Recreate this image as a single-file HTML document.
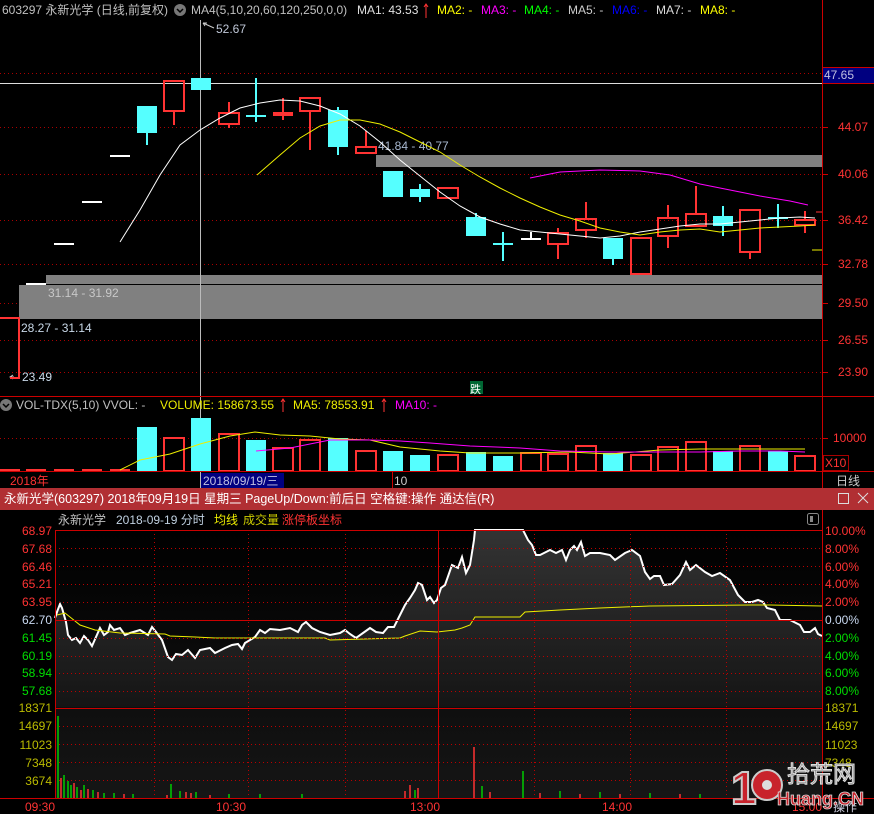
<!DOCTYPE html>
<html><head><meta charset="utf-8"><style>
html,body{margin:0;padding:0;background:#000;width:874px;height:814px;overflow:hidden}
svg{display:block;font-family:"Liberation Sans","Noto Sans CJK SC",sans-serif;font-size:12px}
</style></head><body>
<svg width="874" height="814" viewBox="0 0 874 814" xmlns="http://www.w3.org/2000/svg">
<defs>
<linearGradient id="g" x1="0" y1="0" x2="0" y2="1"><stop offset="0" stop-color="#333"/><stop offset="1" stop-color="#151515"/></linearGradient>
<linearGradient id="bg" x1="0" y1="0" x2="0" y2="1"><stop offset="0" stop-color="#000"/><stop offset="1" stop-color="#161616"/></linearGradient>
</defs>
<rect width="874" height="814" fill="#000"/>
<!-- top header -->
<text x="2" y="14" fill="#c0c0c0">603297 永新光学 (日线,前复权)</text>
<circle cx="180" cy="10" r="6" fill="#777"/><path d="M177 9l3 3 3-3" stroke="#000" stroke-width="1.5" fill="none"/>
<text x="191" y="14" fill="#c0c0c0">MA4(5,10,20,60,120,250,0,0)</text>
<text x="357" y="14" fill="#e0e0e0">MA1: 43.53</text><path d="M426 4v14M424 7l2-3 2 3" stroke="#f33" fill="none"/>
<text x="437" y="14" fill="#ff0">MA2: -</text>
<text x="481" y="14" fill="#f0f">MA3: -</text>
<text x="524" y="14" fill="#0f0">MA4: -</text>
<text x="568" y="14" fill="#ccc">MA5: -</text>
<text x="612" y="14" fill="#00f">MA6: -</text>
<text x="656" y="14" fill="#ddd">MA7: -</text>
<text x="700" y="14" fill="#ff0">MA8: -</text>
<line x1="822.5" y1="0" x2="822.5" y2="488" stroke="#c00"/>
<g stroke="#a00" stroke-dasharray="1,3">
<line x1="0" y1="73.5" x2="822" y2="73.5"/><line x1="0" y1="127.5" x2="822" y2="127.5"/><line x1="0" y1="174.5" x2="822" y2="174.5"/><line x1="0" y1="220.5" x2="822" y2="220.5"/><line x1="0" y1="264.5" x2="822" y2="264.5"/><line x1="0" y1="303.5" x2="822" y2="303.5"/><line x1="0" y1="340.5" x2="822" y2="340.5"/><line x1="0" y1="372.5" x2="822" y2="372.5"/>
</g>
<g stroke="#c00"><line x1="822" y1="127.5" x2="828" y2="127.5"/><line x1="822" y1="174.5" x2="828" y2="174.5"/><line x1="822" y1="220.5" x2="828" y2="220.5"/><line x1="822" y1="264.5" x2="828" y2="264.5"/><line x1="822" y1="303.5" x2="828" y2="303.5"/><line x1="822" y1="340.5" x2="828" y2="340.5"/><line x1="822" y1="372.5" x2="828" y2="372.5"/></g>
<rect x="823" y="67" width="51" height="16" fill="#000080"/><line x1="823" y1="67.5" x2="874" y2="67.5" stroke="#c00"/><line x1="823" y1="83.5" x2="874" y2="83.5" stroke="#c00"/>
<text x="824" y="79" fill="#c0c0e0">47.65</text>
<g fill="#f33"><text x="838" y="131">44.07</text><text x="838" y="178">40.06</text><text x="838" y="224">36.42</text><text x="838" y="268">32.78</text><text x="838" y="307">29.50</text><text x="838" y="344">26.55</text><text x="838" y="376">23.90</text></g>
<rect x="376" y="155" width="446" height="12" fill="#808080"/>
<rect x="46" y="275" width="776" height="9" fill="#808080"/>
<rect x="19" y="285" width="803" height="34" fill="#808080"/>
<text x="378" y="150" fill="#a8b8d0">41.84 - 40.77</text>
<text x="48" y="297" fill="#c8c8c8">31.14 - 31.92</text>
<text x="21" y="332" fill="#c8d8e8">28.27 - 31.14</text>
<text x="22" y="381" fill="#c8d8e8">23.49</text><path d="M14 377l-3 0M13 375l-3 2 3 2" stroke="#ccc" fill="none"/>
<line x1="0" y1="83.5" x2="822" y2="83.5" stroke="#ddd"/>
<line x1="200.5" y1="20" x2="200.5" y2="488" stroke="#bbb"/>
<text x="216" y="33" fill="#c0c8d8">52.67</text><path d="M203 23l11 5M203 23l4 0M203 23l2 3" stroke="#ccc" fill="none"/>
<rect x="470" y="381" width="13" height="13" fill="#063"/><text x="470" y="393" fill="#fff" font-size="11">跌</text>
<g stroke="#f33" stroke-width="2" fill="none">
<path d="M0 318h19v60H10"/>
<rect x="164" y="81" width="20" height="30"/><line x1="174" y1="111" x2="174" y2="125"/>
<rect x="219" y="113" width="20" height="11"/><line x1="229" y1="102" x2="229" y2="113"/><line x1="229" y1="124" x2="229" y2="128"/>
<rect x="300" y="98" width="20" height="13"/><line x1="310" y1="111" x2="310" y2="150"/>
<rect x="356" y="147" width="20" height="6"/><line x1="366" y1="131" x2="366" y2="147"/>
<rect x="438" y="188" width="20" height="10"/>
<rect x="548" y="233" width="20" height="11"/><line x1="558" y1="244" x2="558" y2="259"/><line x1="558" y1="228" x2="558" y2="233"/>
<rect x="576" y="219" width="20" height="11"/><line x1="586" y1="202" x2="586" y2="219"/><line x1="586" y1="230" x2="586" y2="238"/>
<rect x="631" y="238" width="20" height="36"/>
<rect x="658" y="218" width="20" height="18"/><line x1="668" y1="205" x2="668" y2="218"/><line x1="668" y1="236" x2="668" y2="248"/>
<rect x="686" y="214" width="20" height="12"/><line x1="696" y1="186" x2="696" y2="214"/>
<rect x="740" y="210" width="20" height="42"/><line x1="750" y1="252" x2="750" y2="259"/>
<rect x="795" y="220" width="20" height="5"/><line x1="805" y1="211" x2="805" y2="220"/><line x1="805" y1="225" x2="805" y2="233"/>
</g>
<rect x="273" y="112" width="20" height="4" fill="#f33"/><line x1="283" y1="98" x2="283" y2="120" stroke="#f33" stroke-width="2"/>
<g fill="#5ff"><rect x="137" y="106" width="20" height="27"/><rect x="146" y="133" width="2" height="12"/>
<rect x="191" y="78" width="20" height="12"/>
<rect x="328" y="110" width="20" height="37"/><rect x="337" y="107" width="2" height="48"/>
<rect x="383" y="171" width="20" height="26"/>
<rect x="410" y="189" width="20" height="8"/><rect x="419" y="184" width="2" height="18"/>
<rect x="466" y="217" width="20" height="19"/><rect x="475" y="213" width="2" height="5"/>
<rect x="603" y="238" width="20" height="21"/><rect x="612" y="259" width="2" height="6"/>
<rect x="713" y="216" width="20" height="10"/><rect x="722" y="206" width="2" height="30"/>
</g>
<g stroke="#5ff" stroke-width="2"><line x1="246" y1="116" x2="266" y2="116"/><line x1="256" y1="78" x2="256" y2="122"/>
<line x1="493" y1="244" x2="513" y2="244"/><line x1="503" y1="232" x2="503" y2="261"/>
<line x1="768" y1="218" x2="788" y2="218"/><line x1="778" y1="204" x2="778" y2="228"/></g>
<g stroke="#fff" stroke-width="2"><line x1="26" y1="284" x2="46" y2="284"/><line x1="54" y1="244" x2="74" y2="244"/><line x1="82" y1="202" x2="102" y2="202"/><line x1="110" y1="156" x2="130" y2="156"/><line x1="521" y1="239" x2="541" y2="239"/><line x1="531" y1="232" x2="531" y2="240"/></g>
<line x1="812" y1="250" x2="822" y2="250" stroke="#ee0"/><line x1="816" y1="212" x2="822" y2="212" stroke="#f33"/>
<polyline fill="none" stroke="#fff" points="120,242 140,210 160,175 180,145 200,130 220,118 240,108 260,103 280,100 300,101 320,106 340,114 360,126 380,142 400,160 420,176 440,192 460,206 480,217 500,224 520,230 550,233 580,236 600,238 620,236 640,232 660,229 680,226 700,224 720,224 740,222 760,220 780,218 800,217 815,218"/>
<polyline fill="none" stroke="#ee0" points="257,175 280,155 300,138 320,126 340,120 360,120 380,124 400,132 420,142 440,152 460,165 480,177 500,188 520,198 540,207 560,215 580,221 600,228 620,232 640,235 660,232 680,230 700,229 720,232 740,230 760,228 780,227 800,226 815,225"/>
<polyline fill="none" stroke="#f0f" points="530,178 560,172 600,170 640,171 670,175 700,184 730,190 760,196 790,201 808,205"/>
<line x1="0" y1="396.5" x2="874" y2="396.5" stroke="#c00"/>
<circle cx="6" cy="405" r="6" fill="#777"/><path d="M3 404l3 3 3-3" stroke="#000" stroke-width="1.5" fill="none"/>
<text x="16" y="409" fill="#c0c0c0">VOL-TDX(5,10)  VVOL: -</text>
<text x="160" y="409" fill="#ee0">VOLUME: 158673.55</text><path d="M283 399v13M281 402l2-3 2 3" stroke="#f33" fill="none"/>
<text x="293" y="409" fill="#ee0">MA5: 78553.91</text><path d="M384 399v13M382 402l2-3 2 3" stroke="#f33" fill="none"/>
<text x="395" y="409" fill="#f0f">MA10: -</text>
<line x1="0" y1="438.5" x2="822" y2="438.5" stroke="#a00" stroke-dasharray="1,3"/>
<line x1="822" y1="438.5" x2="828" y2="438.5" stroke="#c00"/>
<text x="833" y="442" fill="#f33">10000</text>
<rect x="823.5" y="455.5" width="25" height="15" fill="none" stroke="#a00"/><text x="825" y="467" fill="#f33">X10</text>
<g fill="#5ff"><rect x="137" y="427" width="20" height="44"/><rect x="191" y="418" width="20" height="53"/><rect x="246" y="440" width="20" height="31"/><rect x="328" y="438" width="20" height="33"/><rect x="383" y="451" width="20" height="20"/><rect x="410" y="455" width="20" height="16"/><rect x="466" y="452" width="20" height="19"/><rect x="493" y="456" width="20" height="15"/><rect x="603" y="453" width="20" height="18"/><rect x="713" y="451" width="20" height="20"/><rect x="768" y="451" width="20" height="20"/></g>
<g stroke="#f33" stroke-width="2" fill="none"><rect x="164" y="438" width="20" height="33"/><rect x="219" y="434" width="20" height="37"/><rect x="273" y="448" width="20" height="23"/><rect x="300" y="440" width="20" height="31"/><rect x="356" y="451" width="20" height="20"/><rect x="438" y="455" width="20" height="16"/><rect x="521" y="453" width="20" height="18"/><rect x="548" y="454" width="20" height="17"/><rect x="576" y="446" width="20" height="25"/><rect x="631" y="455" width="20" height="16"/><rect x="658" y="447" width="20" height="24"/><rect x="686" y="442" width="20" height="29"/><rect x="740" y="446" width="20" height="25"/><rect x="795" y="456" width="20" height="15"/></g>
<g fill="#f33"><rect x="0" y="469" width="20" height="2"/><rect x="26" y="469" width="20" height="2"/><rect x="54" y="469" width="20" height="2"/><rect x="82" y="469" width="20" height="2"/><rect x="110" y="469" width="20" height="2"/></g>
<polyline fill="none" stroke="#ee0" points="120,470 140,460 170,454 200,444 230,436 255,432 280,435 310,436 340,439 370,440 400,447 440,451 470,453 520,453 570,452 610,454 660,450 700,449 740,449 780,449 805,449"/>
<polyline fill="none" stroke="#f0f" points="256,451 290,448 330,440 370,440 400,441 430,443 470,446 520,448 560,451 610,452 660,452 700,452 740,451 780,451 805,452"/>
<line x1="0" y1="471.5" x2="874" y2="471.5" stroke="#c00"/>
<text x="10" y="485" fill="#f33">2018年</text>
<rect x="201" y="473" width="83" height="15" fill="#000080"/><text x="203" y="485" fill="#c0c0e0">2018/09/19/三</text>
<line x1="392.5" y1="472" x2="392.5" y2="488" stroke="#c00"/><text x="394" y="485" fill="#ccc">10</text>
<text x="836" y="485" fill="#ccc">日线</text>
<rect x="0" y="488" width="874" height="22" fill="#b12f33"/>
<text x="4" y="503" fill="#fff" font-size="12.5">永新光学(603297) 2018年09月19日 星期三 PageUp/Down:前后日 空格键:操作 通达信(R)</text>
<rect x="838.5" y="493.5" width="10" height="10" fill="none" stroke="#ddd"/>
<path d="M858 493l10 10M868 493l-10 10" stroke="#ddd"/>
<text x="58" y="524" fill="#c0c0c0">永新光学</text><text x="116" y="524" fill="#c0d0e0">2018-09-19 分时</text>
<text x="214" y="524" fill="#ee0">均线</text><text x="243" y="524" fill="#cc0">成交量</text><text x="282" y="524" fill="#f33">涨停板坐标</text>
<rect x="807.5" y="513.5" width="11" height="11" rx="2" fill="none" stroke="#888"/><rect x="810" y="516" width="3" height="6" fill="#888"/>
<rect x="55" y="530" width="767" height="268" fill="url(#bg)"/>
<polygon fill="url(#g)" points="55,618 57,612 60,604 62,608 66,622 68,635 72,640 76,638 80,643 84,636 88,640 92,646 96,637 100,628 104,635 108,632 110,625 114,630 120,628 125,635 130,633 140,630 148,635 152,627 156,632 162,640 168,657 172,660 176,654 182,655 188,650 195,658 200,650 210,648 215,653 225,648 232,645 238,644 242,649 245,643 250,640 255,637 260,630 265,633 270,629 280,630 290,628 298,632 302,625 306,622 312,628 320,632 330,635 340,633 345,630 350,634 356,638 363,633 370,628 376,632 383,633 388,627 394,627 400,615 405,605 410,598 415,590 418,583 422,585 427,600 430,597 434,603 437,600 441,588 445,585 452,565 458,568 462,557 466,573 470,565 474,540 475,530 523,530 528,540 532,545 536,555 540,555 546,552 550,550 556,553 562,550 566,560 570,550 574,546 577,550 581,542 585,556 590,553 600,553 610,555 615,560 625,553 632,550 640,556 645,572 650,579 654,576 660,576 664,585 672,584 680,575 686,562 690,570 696,565 705,572 712,576 720,573 730,580 738,595 745,602 752,602 758,600 763,602 767,608 775,610 780,620 790,620 800,625 804,632 810,632 815,628 818,634 822,636 822,707 55,707"/>
<polyline fill="none" stroke="#fff" stroke-width="2" points="55,618 57,612 60,604 62,608 66,622 68,635 72,640 76,638 80,643 84,636 88,640 92,646 96,637 100,628 104,635 108,632 110,625 114,630 120,628 125,635 130,633 140,630 148,635 152,627 156,632 162,640 168,657 172,660 176,654 182,655 188,650 195,658 200,650 210,648 215,653 225,648 232,645 238,644 242,649 245,643 250,640 255,637 260,630 265,633 270,629 280,630 290,628 298,632 302,625 306,622 312,628 320,632 330,635 340,633 345,630 350,634 356,638 363,633 370,628 376,632 383,633 388,627 394,627 400,615 405,605 410,598 415,590 418,583 422,585 427,600 430,597 434,603 437,600 441,588 445,585 452,565 458,568 462,557 466,573 470,565 474,540 475,530 523,530 528,540 532,545 536,555 540,555 546,552 550,550 556,553 562,550 566,560 570,550 574,546 577,550 581,542 585,556 590,553 600,553 610,555 615,560 625,553 632,550 640,556 645,572 650,579 654,576 660,576 664,585 672,584 680,575 686,562 690,570 696,565 705,572 712,576 720,573 730,580 738,595 745,602 752,602 758,600 763,602 767,608 775,610 780,620 790,620 800,625 804,632 810,632 815,628 818,634 822,636"/>
<polyline fill="none" stroke="#ee0" points="57,615 65,613 80,625 95,630 120,633 165,634 170,636 195,637 215,638 325,638 330,640 400,638 405,636 420,631 437,632 455,630 462,628 470,625 475,617 520,617 525,612 560,610 600,608 650,606 750,605 770,605 822,606"/>
<g stroke="#b00" stroke-dasharray="1,3">
<line x1="55" y1="548.5" x2="822" y2="548.5"/><line x1="55" y1="566.5" x2="822" y2="566.5"/><line x1="55" y1="584.5" x2="822" y2="584.5"/><line x1="55" y1="602.5" x2="822" y2="602.5"/><line x1="55" y1="638.5" x2="822" y2="638.5"/><line x1="55" y1="656.5" x2="822" y2="656.5"/><line x1="55" y1="673.5" x2="822" y2="673.5"/><line x1="55" y1="691.5" x2="822" y2="691.5"/><line x1="55" y1="726.5" x2="822" y2="726.5"/><line x1="55" y1="744.5" x2="822" y2="744.5"/><line x1="55" y1="762.5" x2="822" y2="762.5"/><line x1="55" y1="780.5" x2="822" y2="780.5"/>
<line x1="154.5" y1="530" x2="154.5" y2="798"/><line x1="248.5" y1="530" x2="248.5" y2="798"/><line x1="345.5" y1="530" x2="345.5" y2="798"/><line x1="534.5" y1="530" x2="534.5" y2="798"/><line x1="630.5" y1="530" x2="630.5" y2="798"/><line x1="726.5" y1="530" x2="726.5" y2="798"/>
</g>
<g stroke="#c00"><line x1="55" y1="530.5" x2="822" y2="530.5"/><line x1="55" y1="620.5" x2="822" y2="620.5"/><line x1="55" y1="708.5" x2="822" y2="708.5"/><line x1="0" y1="798.5" x2="874" y2="798.5"/><line x1="55.5" y1="530" x2="55.5" y2="798"/><line x1="822.5" y1="510" x2="822.5" y2="798"/><line x1="438.5" y1="530" x2="438.5" y2="798"/></g>
<g stroke="#0c0" stroke-width="1.5"><line x1="58" y1="716" x2="58" y2="798"/><line x1="64" y1="775" x2="64" y2="798"/><line x1="68" y1="781" x2="68" y2="798"/><line x1="71" y1="785" x2="71" y2="798"/><line x1="77" y1="787" x2="77" y2="798"/><line x1="84" y1="785" x2="84" y2="798"/><line x1="93" y1="790" x2="93" y2="798"/><line x1="104" y1="793" x2="104" y2="798"/><line x1="114" y1="793" x2="114" y2="798"/><line x1="133" y1="794" x2="133" y2="798"/><line x1="171" y1="784" x2="171" y2="798"/><line x1="180" y1="791" x2="180" y2="798"/><line x1="196" y1="792" x2="196" y2="798"/><line x1="229" y1="794" x2="229" y2="798"/><line x1="260" y1="794" x2="260" y2="798"/><line x1="302" y1="794" x2="302" y2="798"/><line x1="415" y1="790" x2="415" y2="798"/><line x1="482" y1="786" x2="482" y2="798"/><line x1="523" y1="771" x2="523" y2="798"/><line x1="560" y1="791" x2="560" y2="798"/><line x1="600" y1="792" x2="600" y2="798"/><line x1="650" y1="793" x2="650" y2="798"/><line x1="700" y1="794" x2="700" y2="798"/></g>
<g stroke="#f33" stroke-width="1.5"><line x1="61" y1="778" x2="61" y2="798"/><line x1="74" y1="783" x2="74" y2="798"/><line x1="81" y1="790" x2="81" y2="798"/><line x1="88" y1="789" x2="88" y2="798"/><line x1="98" y1="792" x2="98" y2="798"/><line x1="124" y1="794" x2="124" y2="798"/><line x1="167" y1="795" x2="167" y2="798"/><line x1="186" y1="792" x2="186" y2="798"/><line x1="191" y1="793" x2="191" y2="798"/><line x1="210" y1="795" x2="210" y2="798"/><line x1="405" y1="791" x2="405" y2="798"/><line x1="410" y1="785" x2="410" y2="798"/><line x1="418" y1="788" x2="418" y2="798"/><line x1="474" y1="747" x2="474" y2="798"/><line x1="490" y1="792" x2="490" y2="798"/><line x1="540" y1="793" x2="540" y2="798"/><line x1="580" y1="794" x2="580" y2="798"/><line x1="620" y1="794" x2="620" y2="798"/><line x1="680" y1="794" x2="680" y2="798"/></g>
<g text-anchor="end">
<text x="52" y="535" fill="#f33">68.97</text><text x="52" y="553" fill="#f33">67.68</text><text x="52" y="571" fill="#f33">66.46</text><text x="52" y="588" fill="#f33">65.21</text><text x="52" y="606" fill="#f33">63.95</text><text x="52" y="624" fill="#c8d8f0">62.70</text><text x="52" y="642" fill="#0d0">61.45</text><text x="52" y="660" fill="#0d0">60.19</text><text x="52" y="677" fill="#0d0">58.94</text><text x="52" y="695" fill="#0d0">57.68</text>
<text x="52" y="712" fill="#bb0">18371</text><text x="52" y="730" fill="#bb0">14697</text><text x="52" y="749" fill="#bb0">11023</text><text x="52" y="767" fill="#bb0">7348</text><text x="52" y="785" fill="#bb0">3674</text>
</g>
<g>
<text x="825" y="535" fill="#f33">10.00%</text><text x="825" y="553" fill="#f33">8.00%</text><text x="825" y="571" fill="#f33">6.00%</text><text x="825" y="588" fill="#f33">4.00%</text><text x="825" y="606" fill="#f33">2.00%</text><text x="825" y="624" fill="#c8d8f0">0.00%</text><text x="825" y="642" fill="#0d0">2.00%</text><text x="825" y="660" fill="#0d0">4.00%</text><text x="825" y="677" fill="#0d0">6.00%</text><text x="825" y="695" fill="#0d0">8.00%</text>
<text x="825" y="712" fill="#bb0">18371</text><text x="825" y="730" fill="#bb0">14697</text><text x="825" y="749" fill="#bb0">11023</text><text x="825" y="767" fill="#bb0">7348</text>
<text x="25" y="811" fill="#f33">09:30</text><text x="216" y="811" fill="#f33">10:30</text><text x="410" y="811" fill="#f33">13:00</text><text x="602" y="811" fill="#f33">14:00</text><text x="792" y="811" fill="#f33">15:00</text><text x="833" y="811" fill="#ccd">操作</text>
</g>
<g>
<text x="731" y="804" font-size="46" font-weight="bold" fill="#c8232c" stroke="#ccc" stroke-width="2" letter-spacing="-4">1</text>
<circle cx="767" cy="785" r="15" fill="#c8232c" stroke="#ccc" stroke-width="2"/>
<circle cx="767" cy="785" r="5" fill="#ddd"/>
<text x="787" y="782" font-size="23" fill="#888" stroke="#ddd" stroke-width="1">拾荒网</text>
<text x="777" y="805" font-size="18" font-weight="bold" fill="#c8232c" stroke="#ddd" stroke-width="0.8">Huang.CN</text>
</g>
</svg>
</body></html>
